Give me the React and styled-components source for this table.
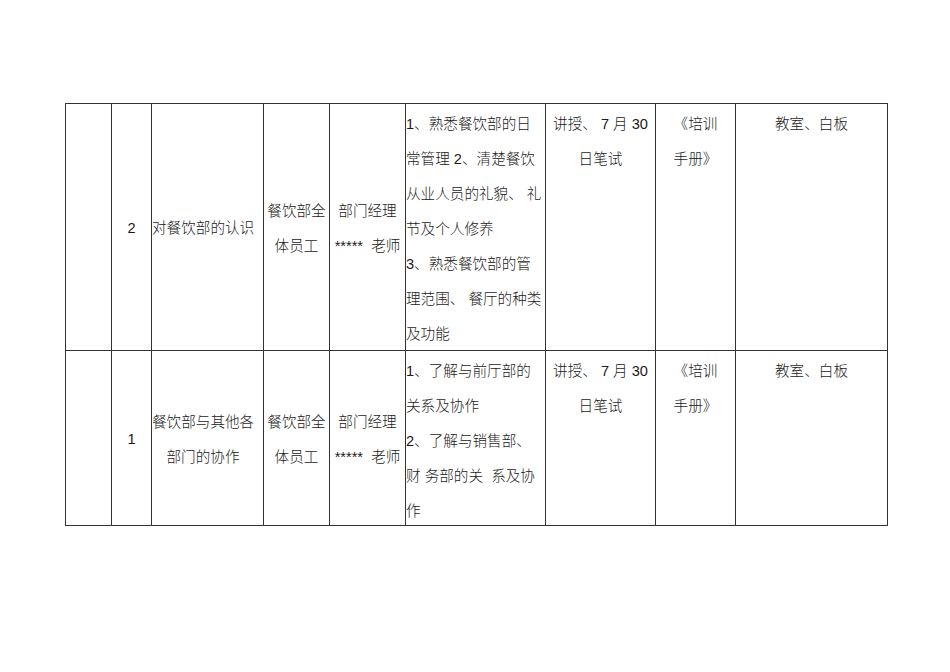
import React from "react";
import styled, { createGlobalStyle } from "styled-components";

const Global = createGlobalStyle`
  html, body { margin: 0; padding: 0; background: #fff; }
  body { font-family: "Liberation Sans", "Noto Sans CJK SC", sans-serif; color: #111; }
`;

const Page = styled.div`
  width: 950px;
  height: 672px;
  padding: 103px 0 0 65px;
  box-sizing: border-box;
  background: #fff;
`;

const Table = styled.table`
  border-collapse: collapse;
  table-layout: fixed;
  width: 822px;
  font-family: "Liberation Sans", "Noto Sans CJK SC", sans-serif;
  font-size: 14.6px;
  font-weight: 300;
  line-height: 35px;
  color: #1a1a1a;
`;

const Row = styled.tr`
  height: ${(p) => p.$h}px;
`;

const Cell = styled.td`
  border: 1px solid #333;
  padding: 3px 0 0 0;
  vertical-align: ${(p) => (p.$top ? "top" : "middle")};
  text-align: ${(p) => (p.$left ? "left" : "center")};
  padding-right: ${(p) => p.$pr || 0}px;
  white-space: nowrap;
  overflow: visible;
`;

const Lines = styled.div`
  display: flex;
  flex-direction: column;
  margin-bottom: ${(p) => p.$mb || 0}px;
`;

const Line = styled.span`
  display: block;
  white-space: pre;
`;

const widths = [46, 40, 112, 66, 76, 140, 110, 80, 152];

const rows = [
  {
    h: 247,
    no: "2",
    topic: ["对餐饮部的认识"],
    topicLeft: true,
    content: [
      "1、熟悉餐饮部的日",
      "常管理 2、清楚餐饮",
      "从业人员的礼貌、 礼",
      "节及个人修养",
      "3、熟悉餐饮部的管",
      "理范围、 餐厅的种类",
      "及功能",
    ],
  },
  {
    h: 175,
    no: "1",
    topic: ["餐饮部与其他各", "部门的协作"],
    topicLeft: false,
    content: [
      "1、了解与前厅部的",
      "关系及协作",
      "2、了解与销售部、",
      "财 务部的关  系及协",
      "作",
    ],
  },
];

const renderLines = (arr) =>
  arr.map((t, i) => <Line key={i}>{t}</Line>);

export default function App() {
  return (
    <>
      <Global />
      <Page>
        <Table>
          <colgroup>
            {widths.map((w, i) => (
              <col key={i} style={{ width: w }} />
            ))}
          </colgroup>
          <tbody>
            {rows.map((r, i) => (
              <Row key={i} $h={r.h}>
                <Cell />
                <Cell>{r.no}</Cell>
                <Cell $left={r.topicLeft} $pr={r.topicLeft ? 0 : 9}>
                  <Lines>{renderLines(r.topic)}</Lines>
                </Cell>
                <Cell>
                  <Lines>{renderLines(["餐饮部全", "体员工"])}</Lines>
                </Cell>
                <Cell>
                  <Lines>{renderLines(["部门经理", "*****  老师"])}</Lines>
                </Cell>
                <Cell $top $left>
                  <Lines $mb={-5}>{renderLines(r.content)}</Lines>
                </Cell>
                <Cell $top>
                  <Lines>{renderLines(["讲授、 7 月 30", "日笔试"])}</Lines>
                </Cell>
                <Cell $top>
                  <Lines>{renderLines(["《培训", "手册》"])}</Lines>
                </Cell>
                <Cell $top>
                  <Lines>{renderLines(["教室、白板"])}</Lines>
                </Cell>
              </Row>
            ))}
          </tbody>
        </Table>
      </Page>
    </>
  );
}
